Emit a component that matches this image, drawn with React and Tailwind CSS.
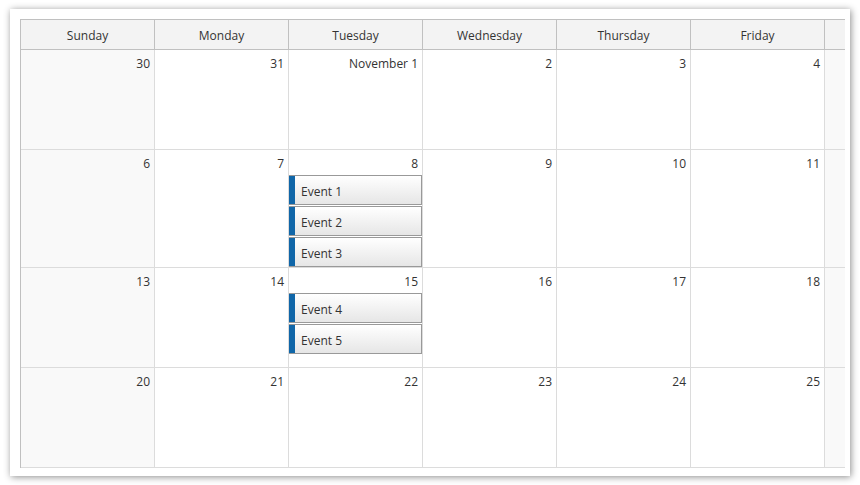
import React from "react";

const days = ["Sunday", "Monday", "Tuesday", "Wednesday", "Thursday", "Friday", ""];

const weeks = [
  { height: "h-[99px]", dates: ["30", "31", "November 1", "2", "3", "4", ""] },
  { height: "h-[117px]", dates: ["6", "7", "8", "9", "10", "11", ""], events: ["Event 1", "Event 2", "Event 3"] },
  { height: "h-[99px]", dates: ["13", "14", "15", "16", "17", "18", ""], events: ["Event 4", "Event 5"] },
  { height: "h-[99px]", dates: ["20", "21", "22", "23", "24", "25", ""] },
];

const EventBox = ({ text }) => (
  <div className="flex h-[30px] border border-[#999] border-l-0 bg-gradient-to-b from-white to-[#e6e6e6]">
    <div className="w-[6px] bg-[#1066a8]" />
    <div className="flex items-center pl-[6px] pt-[4px] text-[12px] text-[#333]">{text}</div>
  </div>
);

export default function App() {
  return (
    <div
      className="w-[860px] h-[485px] bg-white pt-[9px] pl-[10px]"
      style={{ fontFamily: '"Open Sans", "Noto Sans", sans-serif' }}
    >
      <div className="w-[840px] h-[467px] bg-white shadow-[1px_1px_7px_rgba(0,0,0,0.45)] pt-[10px] pl-[10px]">
        <div className="w-[825px] h-[450px] overflow-hidden">
          <div className="w-[940px] border-l border-[#c0c0c0]">
            {/* header */}
            <div className="grid grid-cols-[repeat(7,134px)] border-y border-[#c0c0c0] bg-[#f3f3f3]">
              {days.map((d, i) => (
                <div
                  key={i}
                  className="h-[29px] border-r border-[#c0c0c0] flex items-center justify-center pt-[2px] text-[12px] text-[#333]"
                >
                  {d}
                </div>
              ))}
            </div>
            {/* weeks */}
            {weeks.map((w, wi) => (
              <div key={wi} className="grid grid-cols-[repeat(7,134px)] border-b border-[#dcdcdc]">
                {w.dates.map((date, di) => (
                  <div
                    key={di}
                    className={`${w.height} border-r border-[#dcdcdc] flex flex-col ${
                      di === 0 || di === 6 ? "bg-[#f9f9f9]" : "bg-white"
                    }`}
                  >
                    <div className="h-[25px] flex items-center justify-end pr-[4px] pt-[2px] text-[12px] text-[#333]">
                      {date}
                    </div>
                    {di === 2 && w.events && (
                      <div className="flex flex-col gap-px">
                        {w.events.map((e) => (
                          <EventBox key={e} text={e} />
                        ))}
                      </div>
                    )}
                  </div>
                ))}
              </div>
            ))}
          </div>
        </div>
      </div>
    </div>
  );
}
